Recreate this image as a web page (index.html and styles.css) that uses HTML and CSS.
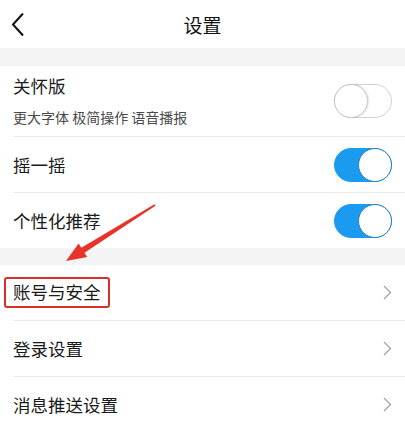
FILE: index.html
```html
<!DOCTYPE html>
<html lang="zh-CN">
<head>
    <meta charset="UTF-8">
    <meta name="viewport" content="width=device-width, initial-scale=1.0">
    <title>设置</title>
    <link rel="stylesheet" href="styles.css">
</head>
<body>
    <header class="topbar">
        <span class="back">
            <svg width="14" height="26" viewBox="0 0 14 26"><polyline points="12,1.5 2,12.5 12,23.5" fill="none" stroke="#111" stroke-width="2"/></svg>
        </span>
        <h1>设置</h1>
        <span></span>
    </header>

    <div class="band"></div>

    <section class="list">
        <div class="row row-tall">
            <div class="row-body">
                <div class="label">
                    <div class="title">关怀版</div>
                    <div class="sub">更大字体 极简操作 语音播报</div>
                </div>
                <span class="switch"></span>
            </div>
        </div>
        <div class="row">
            <div class="row-body">
                <div class="title">摇一摇</div>
                <span class="switch on"></span>
            </div>
        </div>
        <div class="row row-last">
            <div class="row-body">
                <div class="title">个性化推荐</div>
                <span class="switch on"></span>
            </div>
        </div>
    </section>

    <div class="band band-thin"></div>

    <section class="list">
        <div class="row">
            <div class="row-body">
                <div class="title"><span class="mark">账号与安全</span></div>
                <span class="chev"><svg width="9" height="15" viewBox="0 0 9 15"><polyline points="1,1 7.5,7.5 1,14" fill="none" stroke="#a6a6a6" stroke-width="1.3"/></svg></span>
            </div>
        </div>
        <div class="row">
            <div class="row-body">
                <div class="title">登录设置</div>
                <span class="chev"><svg width="9" height="15" viewBox="0 0 9 15"><polyline points="1,1 7.5,7.5 1,14" fill="none" stroke="#a6a6a6" stroke-width="1.3"/></svg></span>
            </div>
        </div>
        <div class="row row-last">
            <div class="row-body">
                <div class="title">消息推送设置</div>
                <span class="chev"><svg width="9" height="15" viewBox="0 0 9 15"><polyline points="1,1 7.5,7.5 1,14" fill="none" stroke="#a6a6a6" stroke-width="1.3"/></svg></span>
            </div>
        </div>
    </section>

    <!-- annotation arrow drawn over the page -->
    <svg class="arrow" width="405" height="426" viewBox="0 0 405 426">
        <polygon points="66,261 78.6,243.5 81.3,247.8 154.5,204.2 155.5,205.8 84.5,252.8 87.2,257.1" fill="#e8332a"/>
    </svg>
</body>
</html>
```

FILE: styles.css
```css
body {
    margin: 0;
    padding: 0;
    background-color: #fff;
    color: #222;
    font-family: "Noto Sans CJK SC", "Noto Sans", sans-serif;
    position: relative;
    overflow: hidden;
    height: 426px;
}

.topbar {
    height: 48px;
    display: grid;
    grid-template-columns: 40px 1fr 40px;
    align-items: center;
}

.back {
    display: flex;
    padding-left: 11px;
    padding-top: 1px;
}

.topbar h1 {
    margin: 0;
    text-align: center;
    font-size: 19px;
    font-weight: 400;
    color: #111;
}

.band {
    height: 18px;
    background-color: #f4f4f4;
}

.band-thin {
    height: 17px;
}

.row {
    padding-left: 13px;
}

.row-body {
    height: 55px;
    display: flex;
    align-items: center;
    justify-content: space-between;
    padding-right: 14px;
    border-bottom: 1px solid #ececec;
}

.row-tall .row-body {
    height: 70px;
}

.row-last .row-body {
    border-bottom: none;
    height: 55px;
}

.title {
    font-size: 17.5px;
    line-height: 24px;
    color: #1a1a1a;
}

.label .title {
    margin-top: -1px;
}

.sub {
    font-size: 14px;
    line-height: 20px;
    margin-top: 9px;
    color: #4a4a4a;
}

.switch {
    width: 56px;
    height: 32px;
    border-radius: 17px;
    border: 1px solid #d2d2d2;
    background-color: #fff;
    position: relative;
    margin-right: -1px;
}

.switch::after {
    content: "";
    position: absolute;
    top: -1px;
    left: -1px;
    width: 32px;
    height: 32px;
    border-radius: 50%;
    background-color: #fff;
    border: 1px solid #c8c8c8;
    box-shadow: 1px 0 2px rgba(0, 0, 0, 0.12);
}

.switch.on {
    background-color: #1a9bf0;
    border-color: #1a9bf0;
}

.switch.on::after {
    left: auto;
    right: -1px;
    border-color: #2b7fbc;
    box-shadow: none;
}

.chev {
    display: flex;
    margin-right: -1px;
}

.mark {
    display: inline-block;
    margin-left: -9px;
    padding: 1px 7px 2px 7px;
    border: 2.5px solid #d9302a;
    border-radius: 3px;
}

.arrow {
    position: absolute;
    top: 0;
    left: 0;
    pointer-events: none;
}
```
